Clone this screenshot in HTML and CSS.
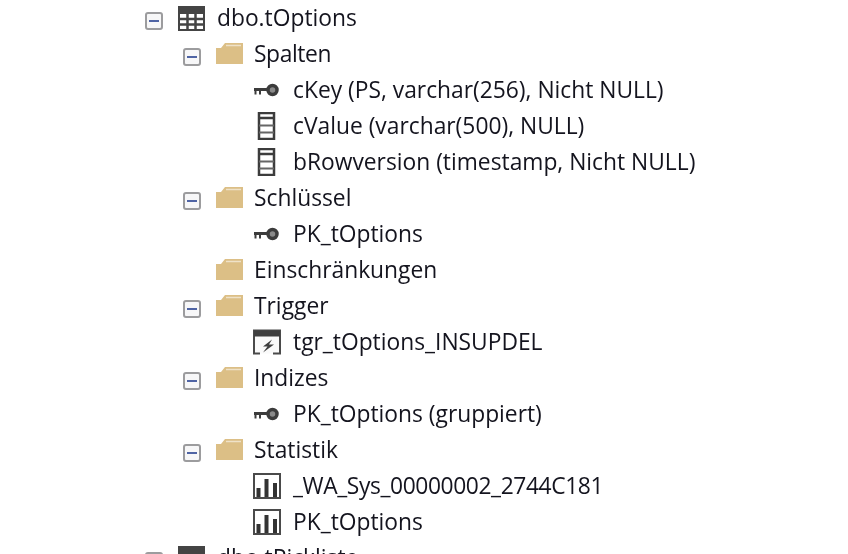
FILE: index.html
```html
<!DOCTYPE html>
<html>
<head>
	<meta charset="utf-8">
	<title>dbo.tOptions</title>
	<link rel="stylesheet" href="styles.css">
</head>
<body>
	<svg class="defs" width="0" height="0">
		<symbol id="i-toggle" viewBox="0 0 18 18">
			<rect x="1" y="1" width="16" height="16" rx="2" fill="#f7f7f8" stroke="#9c9c9e" stroke-width="2"/>
			<rect x="4" y="8" width="10" height="2" fill="#4f64a4"/>
		</symbol>
		<symbol id="i-table" viewBox="0 0 27 25">
			<rect x="1" y="1" width="25" height="23" fill="#fff" stroke="#444" stroke-width="2"/>
			<rect x="1" y="1" width="25" height="7" fill="#444"/>
			<path d="M9.500 8V24M17.500 8V24M1 13H26M1 18.500H26" stroke="#444" stroke-width="2.500" fill="none"/>
		</symbol>
		<symbol id="i-folder" viewBox="0 0 27 23">
			<path d="M0 6H5L9 1H27V22H0Z" fill="#dcbf86"/>
			<path d="M10 3.500H25" stroke="#efe2c8" stroke-width="1.500" fill="none"/>
		</symbol>
		<symbol id="i-key" viewBox="0 0 27 16">
			<circle cx="19.500" cy="8" r="4.500" fill="#8a8a8a" stroke="#3c3c3c" stroke-width="3.500"/>
			<path d="M1 7.500H15" stroke="#3c3c3c" stroke-width="3" fill="none"/>
			<path d="M2.500 8V12.500M7 8V12.500" stroke="#3c3c3c" stroke-width="2" fill="none"/>
		</symbol>
		<symbol id="i-column" viewBox="0 0 27 28">
			<rect x="6" y="1" width="15" height="26" fill="#fff" stroke="#3c3c3c" stroke-width="2.500"/>
			<path d="M6 6H21" stroke="#3c3c3c" stroke-width="2.500" fill="none"/>
			<path d="M6 13.500H21M6 20.500H21" stroke="#666" stroke-width="2" fill="none"/>
		</symbol>
		<symbol id="i-trigger" viewBox="0 0 28 25">
			<rect x="1" y="1" width="26" height="23" fill="#fafafa"/>
			<path d="M7 24H1V1H27V24H20" fill="none" stroke="#4a4a4a" stroke-width="2"/>
			<rect x="1" y="1" width="26" height="6" fill="#3f3f3f"/>
			<path d="M19 10L10 17H14.500L10 23L21 15H16Z" fill="#3f3f3f"/>
		</symbol>
		<symbol id="i-stats" viewBox="0 0 28 26">
			<rect x="1" y="1" width="26" height="24" fill="#fff" stroke="#4a4a4a" stroke-width="2"/>
			<path d="M5.500 24V15M13.500 24V6M22 24V10" stroke="#333" stroke-width="4" fill="none"/>
		</symbol>
	</svg>

	<div class="tree">
		<div class="row level-0">
			<svg class="toggle"><use href="#i-toggle"/></svg>
			<svg class="icon table"><use href="#i-table"/></svg>
			<span>dbo.tOptions</span>
		</div>

		<div class="row level-1">
			<svg class="toggle"><use href="#i-toggle"/></svg>
			<svg class="icon folder"><use href="#i-folder"/></svg>
			<span class="tight">Spalten</span>
		</div>
		<div class="row level-2">
			<svg class="icon key"><use href="#i-key"/></svg>
			<span>cKey (PS, varchar(256), Nicht NULL)</span>
		</div>
		<div class="row level-2">
			<svg class="icon column"><use href="#i-column"/></svg>
			<span>cValue (varchar(500), NULL)</span>
		</div>
		<div class="row level-2">
			<svg class="icon column"><use href="#i-column"/></svg>
			<span>bRowversion (timestamp, Nicht NULL)</span>
		</div>

		<div class="row level-1">
			<svg class="toggle"><use href="#i-toggle"/></svg>
			<svg class="icon folder"><use href="#i-folder"/></svg>
			<span>Schlüssel</span>
		</div>
		<div class="row level-2">
			<svg class="icon key"><use href="#i-key"/></svg>
			<span>PK_tOptions</span>
		</div>

		<div class="row level-1">
			<div class="toggle"></div>
			<svg class="icon folder"><use href="#i-folder"/></svg>
			<span>Einschränkungen</span>
		</div>

		<div class="row level-1">
			<svg class="toggle"><use href="#i-toggle"/></svg>
			<svg class="icon folder"><use href="#i-folder"/></svg>
			<span>Trigger</span>
		</div>
		<div class="row level-2">
			<svg class="icon trigger"><use href="#i-trigger"/></svg>
			<span>tgr_tOptions_INSUPDEL</span>
		</div>

		<div class="row level-1">
			<svg class="toggle"><use href="#i-toggle"/></svg>
			<svg class="icon folder"><use href="#i-folder"/></svg>
			<span>Indizes</span>
		</div>
		<div class="row level-2">
			<svg class="icon key"><use href="#i-key"/></svg>
			<span>PK_tOptions (gruppiert)</span>
		</div>

		<div class="row level-1">
			<svg class="toggle"><use href="#i-toggle"/></svg>
			<svg class="icon folder"><use href="#i-folder"/></svg>
			<span>Statistik</span>
		</div>
		<div class="row level-2">
			<svg class="icon stats"><use href="#i-stats"/></svg>
			<span class="tighter">_WA_Sys_00000002_2744C181</span>
		</div>
		<div class="row level-2">
			<svg class="icon stats"><use href="#i-stats"/></svg>
			<span>PK_tOptions</span>
		</div>

		<div class="row level-0">
			<svg class="toggle"><use href="#i-toggle"/></svg>
			<svg class="icon table"><use href="#i-table"/></svg>
			<span>dbo.tPickliste</span>
		</div>
	</div>
</body>
</html>
```

FILE: styles.css
```css
html, body{
	margin: 0;
	height: 100%;
	overflow: hidden;
	background: #fff;
}
.defs{
	display: block;
	height: 0;
}
/*--------Arbol-----------*/
.tree{
	font-family: 'Open Sans', sans-serif;
	font-size: 22.8px;
	color: #14141e;
	filter: blur(0.5px);
}
.row{
	display: flex;
	align-items: center;
	height: 36px;
	white-space: nowrap;
}
.row span{
	margin-top: -1px;
}
.tight{
	letter-spacing: -0.4px;
}
.tighter{
	letter-spacing: -0.4px;
}
.level-0{
	padding-left: 145px;
}
.level-1{
	padding-left: 183px;
}
.level-2{
	padding-left: 253px;
}
/*--------Iconos-----------*/
.toggle{
	width: 18px;
	height: 18px;
	margin-top: 6px;
	margin-right: 15px;
	flex-shrink: 0;
}
.level-0 .toggle{
	margin-top: 6px;
}
.icon{
	width: 27px;
	flex-shrink: 0;
}
.level-0 .icon{
	height: 25px;
	margin-top: 0;
	margin-right: 12px;
}
.level-1 .icon{
	height: 23px;
	margin-top: -2px;
	margin-right: 11px;
}
.level-2 .icon{
	margin-right: 13px;
}
.key{
	height: 16px;
}
.column{
	height: 28px;
}
.level-2 .trigger, .level-2 .stats{
	width: 28px;
	height: 26px;
	margin-right: 12px;
}
```
